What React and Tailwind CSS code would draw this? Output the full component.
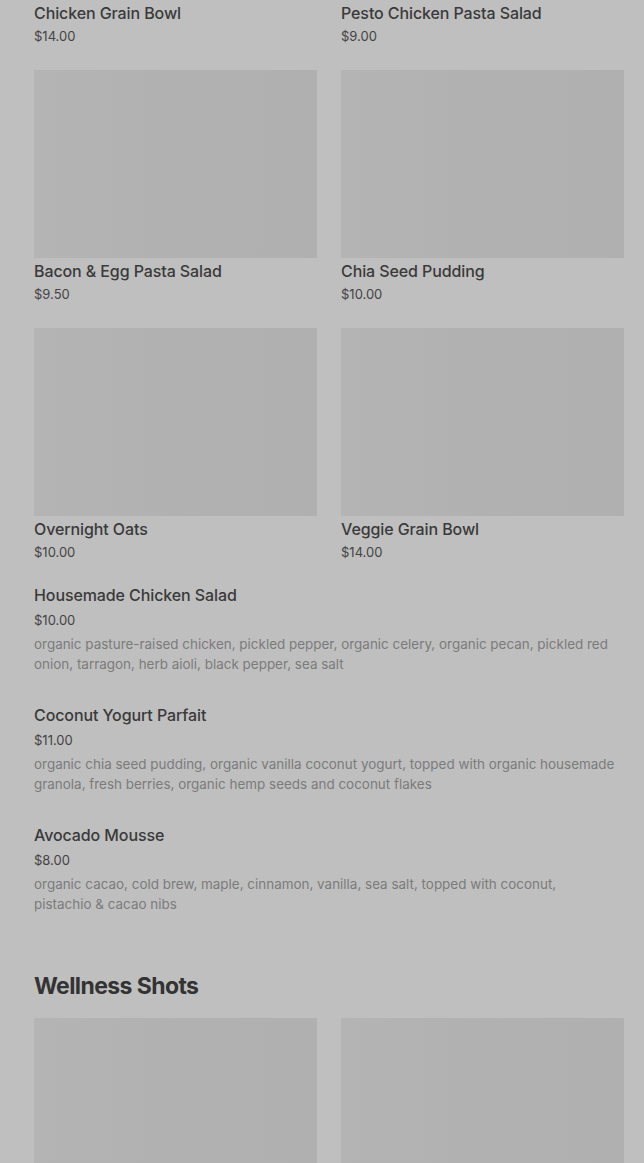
import React from 'react';

const gridRows = [
  [
    { name: 'Bacon & Egg Pasta Salad', price: '$9.50' },
    { name: 'Chia Seed Pudding', price: '$10.00' },
  ],
  [
    { name: 'Overnight Oats', price: '$10.00' },
    { name: 'Veggie Grain Bowl', price: '$14.00' },
  ],
];

const listItems = [
  {
    name: 'Housemade Chicken Salad',
    price: '$10.00',
    desc: 'organic pasture-raised chicken, pickled pepper, organic celery, organic pecan, pickled red onion, tarragon, herb aioli, black pepper, sea salt',
  },
  {
    name: 'Coconut Yogurt Parfait',
    price: '$11.00',
    desc: 'organic chia seed pudding, organic vanilla coconut yogurt, topped with organic housemade granola, fresh berries, organic hemp seeds and coconut flakes',
  },
  {
    name: 'Avocado Mousse',
    price: '$8.00',
    desc: 'organic cacao, cold brew, maple, cinnamon, vanilla, sea salt, topped with coconut, pistachio & cacao nibs',
  },
];

function Caption({ name, price }) {
  return (
    <div className="flex flex-col">
      <div className="text-[16px] leading-[26px] font-medium tracking-[-0.1px] text-[#3a3a3a]">{name}</div>
      <div className="text-[13px] leading-[20px] text-[#444]">{price}</div>
    </div>
  );
}

function Card({ name, price }) {
  return (
    <div className="flex flex-col">
      <div className="h-[188px] bg-gradient-to-r from-[#b4b4b4] via-[#b1b1b1] to-[#b0b0b0]" />
      <Caption name={name} price={price} />
    </div>
  );
}

export default function App() {
  return (
    <div
      className="min-h-[1163px] bg-[#bfbfbf] pl-[34px] pr-[20px] overflow-hidden"
      style={{ fontFamily: 'Inter, "Noto Sans", sans-serif' }}
    >
      {/* items from the row above, images scrolled out of view */}
      <div className="grid grid-cols-2 gap-x-[24px]">
        <Caption name="Chicken Grain Bowl" price="$14.00" />
        <Caption name="Pesto Chicken Pasta Salad" price="$9.00" />
      </div>

      {gridRows.map((row, i) => (
        <div key={i} className="grid grid-cols-2 gap-x-[24px] mt-[24px]">
          {row.map((item) => (
            <Card key={item.name} {...item} />
          ))}
        </div>
      ))}

      <div className="flex flex-col gap-[28px] mt-[20px]">
        {listItems.map((item) => (
          <div key={item.name} className="flex flex-col">
            <div className="text-[16px] leading-[26px] font-medium tracking-[-0.1px] text-[#3a3a3a]">{item.name}</div>
            <div className="text-[13px] leading-[24px] text-[#444]">{item.price}</div>
            <div className="mt-[2px] max-w-[582px] text-[13.45px] leading-[20px] text-[#7b7b7b]">{item.desc}</div>
          </div>
        ))}
      </div>

      <h2 className="mt-[56px] text-[23px] leading-[32px] font-bold tracking-[-0.6px] text-[#333]">
        Wellness Shots
      </h2>

      <div className="grid grid-cols-2 gap-x-[24px] mt-[16px]">
        <div className="h-[188px] bg-gradient-to-r from-[#b4b4b4] via-[#b1b1b1] to-[#b0b0b0]" />
        <div className="h-[188px] bg-gradient-to-r from-[#b4b4b4] via-[#b1b1b1] to-[#b0b0b0]" />
      </div>
    </div>
  );
}
